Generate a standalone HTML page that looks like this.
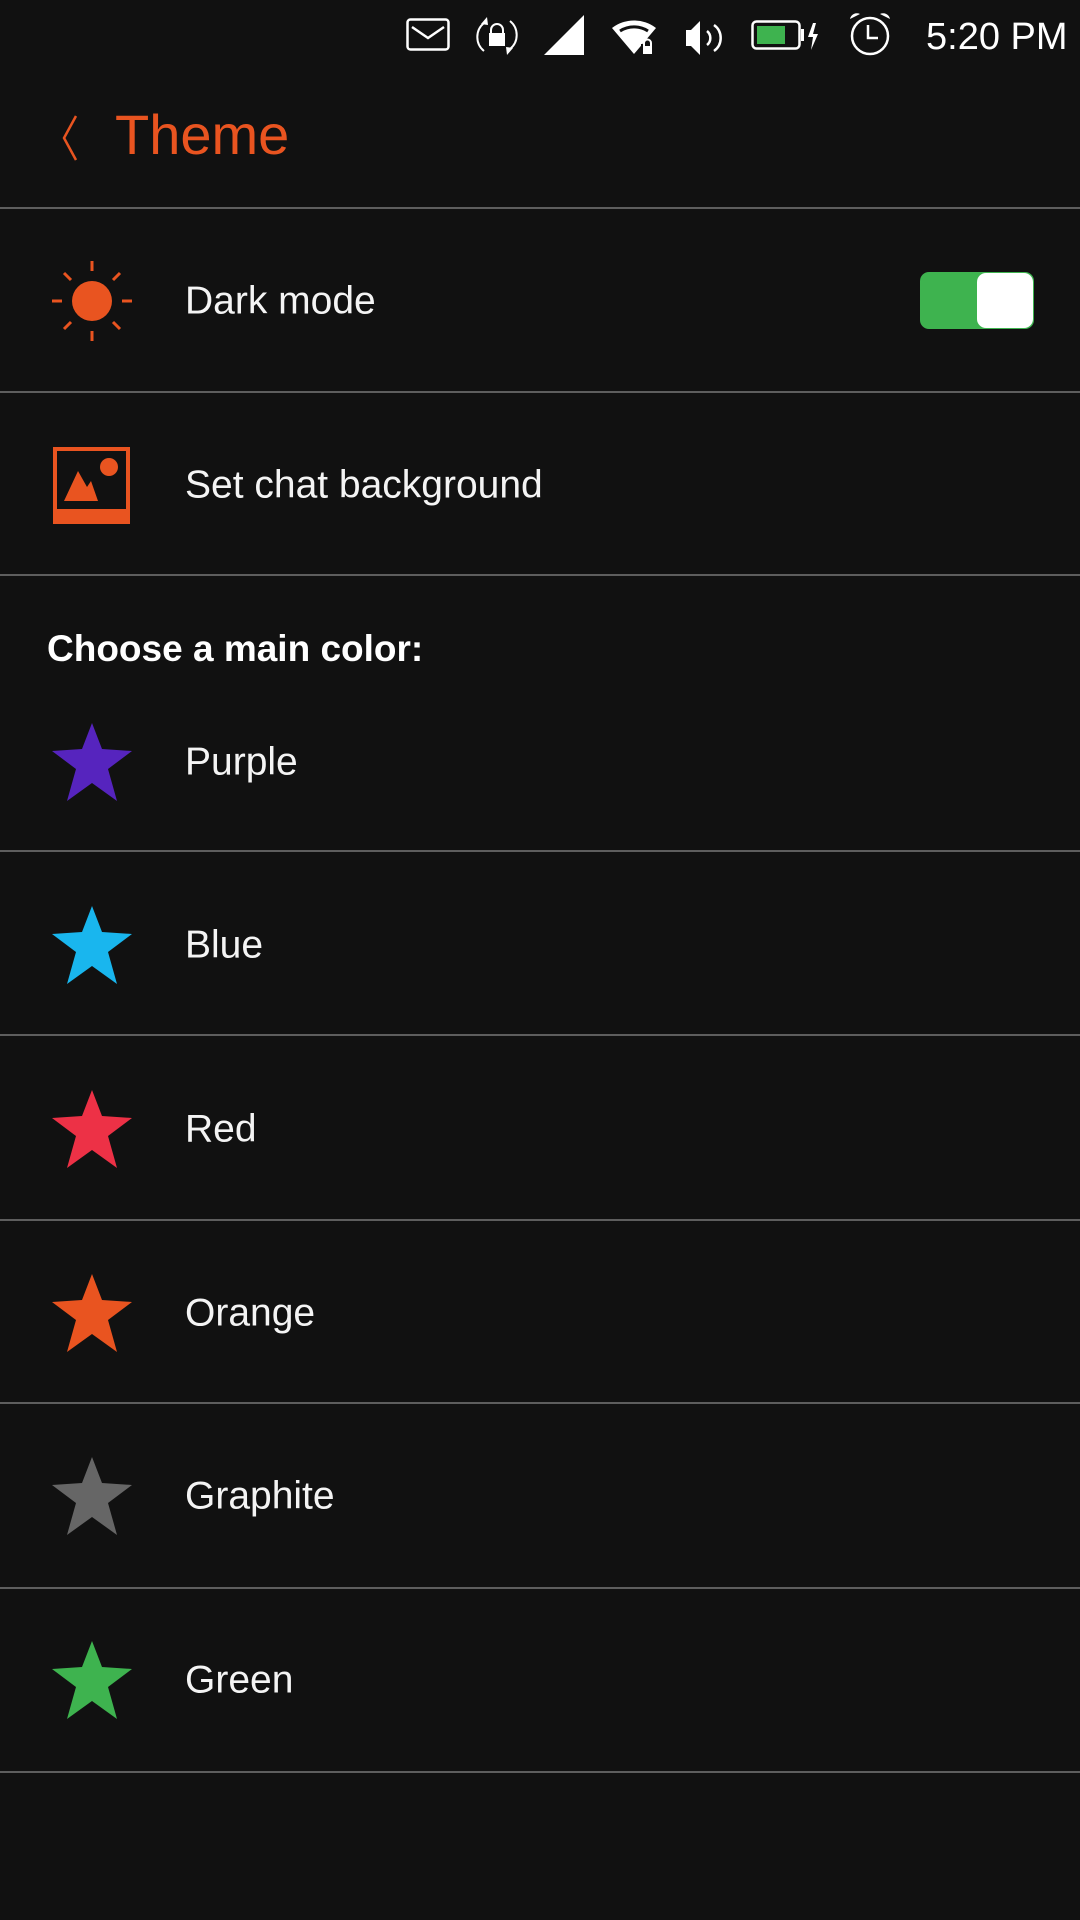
<!DOCTYPE html>
<html><head><meta charset="utf-8"><style>
*{margin:0;padding:0;box-sizing:border-box}
body{width:1080px;height:1920px;background:#111111;font-family:"Liberation Sans",sans-serif;color:#fff;position:relative;overflow:hidden}
.a{position:absolute}
.hr{position:absolute;left:0;width:1080px;height:2px;background:#5e5e5e}
.lbl{position:absolute;left:185px;font-size:39px;font-weight:300;color:#f4f4f4;line-height:1;transform:translateY(-50%)}
.star{position:absolute;left:52px;width:80px;height:78px}
</style></head><body>
<!-- status bar icons -->
<svg class="a" style="left:406px;top:18px" width="44" height="33" viewBox="0 0 44 33"><rect x="1.5" y="1.5" width="41" height="30" rx="3" fill="none" stroke="#fff" stroke-width="2.5"/><path d="M6 9 L22 20 L38 9" fill="none" stroke="#fff" stroke-width="2.5"/></svg>
<svg class="a" style="left:475px;top:15px" width="44" height="42" viewBox="0 0 44 42">
<g fill="none" stroke="#fff" stroke-width="2"><path d="M9 8 A18 18 0 0 0 9 36"/><path d="M35 6 A18 18 0 0 1 35 34"/><path d="M16 19 v-4 a6 6 0 0 1 12 0 v4"/></g>
<g fill="#fff"><rect x="14" y="18" width="16" height="13"/><path d="M6 9 l6-7 1 8z"/><path d="M38 33 l-6 7-1-8z"/></g></svg>
<svg class="a" style="left:544px;top:15px" width="40" height="40" viewBox="0 0 40 40"><path d="M0 40 L40 0 L40 40z" fill="#fff"/></svg>
<svg class="a" style="left:612px;top:18px" width="46" height="38" viewBox="0 0 46 38"><path d="M0 10 A36 36 0 0 1 44 10 L22 36z" fill="#fff"/><path d="M8 13 A26 26 0 0 1 36 13" fill="none" stroke="#111" stroke-width="3"/><rect x="29" y="26" width="12" height="11" fill="#111"/><rect x="31" y="28" width="9" height="8" fill="#fff"/><path d="M32 28 v-3 a3.5 3.5 0 0 1 7 0 v3" fill="none" stroke="#fff" stroke-width="2"/></svg>
<svg class="a" style="left:686px;top:20px" width="40" height="36" viewBox="0 0 40 36"><path d="M0 10 h5 l9-9 v34 l-9-9 h-5z" fill="#fff"/><g fill="none" stroke="#fff" stroke-width="2.5"><path d="M21 11 a9 9 0 0 1 0 14"/><path d="M28 5 a16 16 0 0 1 0 26"/></g></svg>
<svg class="a" style="left:751px;top:20px" width="72" height="32" viewBox="0 0 72 32"><rect x="1.5" y="1.5" width="47" height="27" rx="4" fill="none" stroke="#fff" stroke-width="2.5"/><rect x="6" y="6" width="28" height="18" fill="#3eb34f"/><rect x="50" y="9" width="3" height="12" fill="#fff"/><path d="M62 3 l-5 14 h5 l-2 13 7-16 h-5 l3-11z" fill="#fff"/></svg>
<svg class="a" style="left:848px;top:12px" width="44" height="44" viewBox="0 0 44 44"><circle cx="22" cy="24" r="18" fill="none" stroke="#fff" stroke-width="2.5"/><path d="M20 13 v13 h10" fill="none" stroke="#fff" stroke-width="2.5"/><path d="M2 7 a7 7 0 0 1 10-5z M42 7 a7 7 0 0 0-10-5z" fill="#fff"/></svg>
<div class="a" style="left:926px;top:16px;font-size:38px;font-weight:300">5:20 PM</div>
<!-- header -->
<svg class="a" style="left:58px;top:114px" width="24" height="50"><path d="M18 2 L6 24 L18 46" fill="none" stroke="#e95420" stroke-width="2.5"/></svg>
<div class="a" style="left:115px;top:104px;font-size:56px;color:#e95420;line-height:1.1">Theme</div>
<div class="hr" style="top:207px"></div>
<!-- dark mode -->
<svg class="a" style="left:52px;top:261px" width="80" height="80" viewBox="0 0 80 80">
<circle cx="40" cy="40" r="20" fill="#e95420"/>
<g stroke="#e95420" stroke-width="3">
<path d="M40 0v10M40 70v10M0 40h10M70 40h10M12 12l7 7M61 61l7 7M68 12l-7 7M19 61l-7 7"/></g></svg>
<div class="lbl" style="top:301px">Dark mode</div>
<div class="a" style="left:920px;top:272px;width:114px;height:57px;border-radius:9px;background:#3eb34f"></div>
<div class="a" style="left:977px;top:273px;width:56px;height:55px;border-radius:9px;background:#fff"></div>
<div class="hr" style="top:391px"></div>
<!-- chat bg -->
<svg class="a" style="left:53px;top:447px" width="77" height="77" viewBox="0 0 77 77">
<rect x="2" y="2" width="73" height="73" fill="none" stroke="#e95420" stroke-width="4"/>
<rect x="2" y="62" width="73" height="13" fill="#e95420"/>
<circle cx="56" cy="20" r="9" fill="#e95420"/>
<path d="M11 54 L25 24 L34 40 L38 34 L45 54z" fill="#e95420"/></svg>
<div class="lbl" style="top:485px">Set chat background</div>
<div class="hr" style="top:574px"></div>
<div class="a" style="left:47px;top:628px;font-size:37px;font-weight:bold">Choose a main color:</div>
<!-- stars -->
<svg width="0" height="0" style="position:absolute"><defs><path id="s" d="M40 0 L50 26 L80 28 L56 46 L65 78 L40 60 L15 78 L24 46 L0 28 L30 26z"/></defs></svg>
<svg class="star" style="top:723px" viewBox="0 0 80 78"><use href="#s" fill="#5624be"/></svg>
<div class="lbl" style="top:762px">Purple</div>
<div class="hr" style="top:850px"></div>
<svg class="star" style="top:906px" viewBox="0 0 80 78"><use href="#s" fill="#19b6ee"/></svg>
<div class="lbl" style="top:945px">Blue</div>
<div class="hr" style="top:1034px"></div>
<svg class="star" style="top:1090px" viewBox="0 0 80 78"><use href="#s" fill="#ed3146"/></svg>
<div class="lbl" style="top:1129px">Red</div>
<div class="hr" style="top:1219px"></div>
<svg class="star" style="top:1274px" viewBox="0 0 80 78"><use href="#s" fill="#e95420"/></svg>
<div class="lbl" style="top:1313px">Orange</div>
<div class="hr" style="top:1402px"></div>
<svg class="star" style="top:1457px" viewBox="0 0 80 78"><use href="#s" fill="#666666"/></svg>
<div class="lbl" style="top:1496px">Graphite</div>
<div class="hr" style="top:1587px"></div>
<svg class="star" style="top:1641px" viewBox="0 0 80 78"><use href="#s" fill="#3eb34f"/></svg>
<div class="lbl" style="top:1680px">Green</div>
<div class="hr" style="top:1771px"></div>
</body></html>
